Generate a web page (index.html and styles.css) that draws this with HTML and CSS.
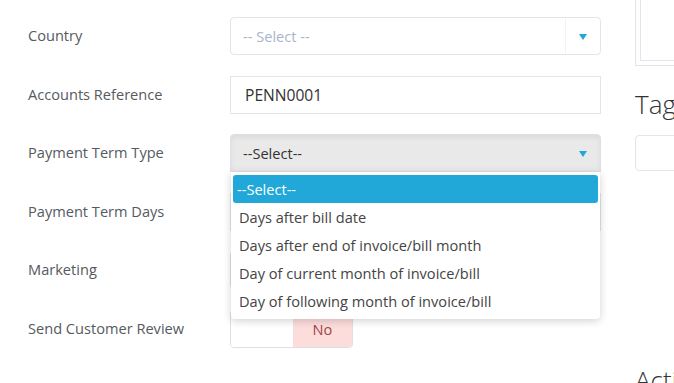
FILE: index.html
```html
<!DOCTYPE html>
<html>
<head>
<meta charset="utf-8">
<link rel="stylesheet" href="styles.css">
</head>
<body>
<div class="page">
  <div class="form">
    <div class="row">
      <div class="label">Country</div>
      <div class="field select country">
        <span class="placeholder">-- Select --</span>
        <span class="arrow-box"><span class="caret"></span></span>
      </div>
    </div>
    <div class="row">
      <div class="label">Accounts Reference</div>
      <div class="field input"><span class="value">PENN0001</span></div>
    </div>
    <div class="row">
      <div class="label">Payment Term Type</div>
      <div class="field-wrap">
        <div class="field select open">
          <span class="value">--Select--</span>
          <span class="arrow-box plain"><span class="caret"></span></span>
        </div>
        <ul class="menu">
          <li class="active">--Select--</li>
          <li>Days after bill date</li>
          <li>Days after end of invoice/bill month</li>
          <li>Day of current month of invoice/bill</li>
          <li>Day of following month of invoice/bill</li>
        </ul>
      </div>
    </div>
    <div class="row">
      <div class="label">Payment Term Days</div>
      <div class="field input"></div>
    </div>
    <div class="row">
      <div class="label">Marketing</div>
      <div class="field toggle"><span class="off"></span><span class="no">No</span></div>
    </div>
    <div class="row">
      <div class="label">Send Customer Review</div>
      <div class="field toggle"><span class="off"></span><span class="no">No</span></div>
    </div>
  </div>
  <div class="side">
    <div class="thumb"><div class="thumb-inner"></div></div>
    <h3 class="heading">Tags</h3>
    <div class="tags-input"></div>
    <h3 class="heading act">Activity</h3>
  </div>
</div>
</body>
</html>
```

FILE: styles.css
```css
html, body {
  margin: 0;
  padding: 0;
  background: #fff;
  overflow: hidden;
}
body {
  font-family: "Open Sans", "Liberation Sans", sans-serif;
  color: #555;
}
.page {
  display: flex;
  width: 674px;
  height: 383px;
  overflow: hidden;
}
.form {
  width: 573px;
  flex: none;
  padding: 17px 0 0 28px;
  display: flex;
  flex-direction: column;
  gap: 20.5px;
}
.row {
  display: grid;
  grid-template-columns: 202px 371px;
  align-items: center;
  height: 38px;
}
.label {
  font-size: 14.6px;
  color: #555a60;
  margin-top: -2px;
}
.field {
  box-sizing: border-box;
  height: 38px;
  border: 1px solid #e1e5ec;
  background: #fff;
  display: flex;
  align-items: center;
  position: relative;
}
.input {
  padding-left: 14px;
}
.value {
  font-size: 15.6px;
  color: #333;
}
.select {
  border-radius: 4px;
  padding-left: 12px;
}
.placeholder {
  font-size: 14.6px;
  color: #a9b4cc;
}
.arrow-box {
  margin-left: auto;
  width: 34px;
  height: 100%;
  border-left: 1px solid #f1f3f6;
  display: flex;
  align-items: center;
  justify-content: center;
}
.arrow-box.plain {
  border-left: none;
}
.caret {
  width: 0;
  height: 0;
  border-left: 4px solid transparent;
  border-right: 4px solid transparent;
  border-top: 6px solid #21a8d8;
  margin-top: 1px;
}
.field-wrap {
  position: relative;
  height: 38px;
}
.open {
  background: #e9e9e9;
  border-color: #dcdfe4;
  border-radius: 4px 4px 0 0;
  box-shadow: inset 0 3px 5px rgba(0,0,0,0.06);
}
.open .value {
  font-size: 14.6px;
}
.menu {
  position: absolute;
  top: 38px;
  left: 1px;
  width: 369px;
  box-sizing: border-box;
  margin: 0;
  padding: 3px 2px 4px;
  list-style: none;
  background: #fff;
  border-radius: 0 0 4px 4px;
  box-shadow: 0 2px 8px rgba(0,0,0,0.18);
  z-index: 5;
}
.menu li {
  box-sizing: border-box;
  height: 28px;
  line-height: 27px;
  padding-top: 1px;
  padding-left: 6px;
  font-size: 14.6px;
  color: #444;
  border-radius: 3px;
}
.menu li.active {
  background: #21a8d8;
  color: #fff;
  padding-left: 4px;
}
.toggle {
  width: 123px;
  border-radius: 4px;
  overflow: hidden;
  border-color: #dcdfe4;
  align-items: stretch;
}
.toggle .off {
  width: 62px;
  background: #fff;
}
.toggle .no {
  flex: 1;
  background: #fddcdc;
  color: #9a4646;
  font-size: 14.6px;
  display: flex;
  align-items: center;
  justify-content: center;
}
.side {
  flex: none;
  width: 200px;
  margin-left: 34px;
}
.thumb {
  box-sizing: border-box;
  height: 66px;
  border: 1px solid #e1e5ec;
  border-top: none;
  padding: 0 4px 5px;
}
.thumb-inner {
  height: 100%;
  border: 1px solid #e1e5ec;
  border-top: none;
}
.heading {
  margin: 24px 0 0;
  font-size: 26px;
  font-weight: 300;
  line-height: 1.1;
  color: #333;
}
.tags-input {
  margin-top: 16px;
  height: 36px;
  box-sizing: border-box;
  border: 1px solid #e1e5ec;
  border-radius: 4px;
}
.heading.act {
  margin-top: 195px;
}
```
